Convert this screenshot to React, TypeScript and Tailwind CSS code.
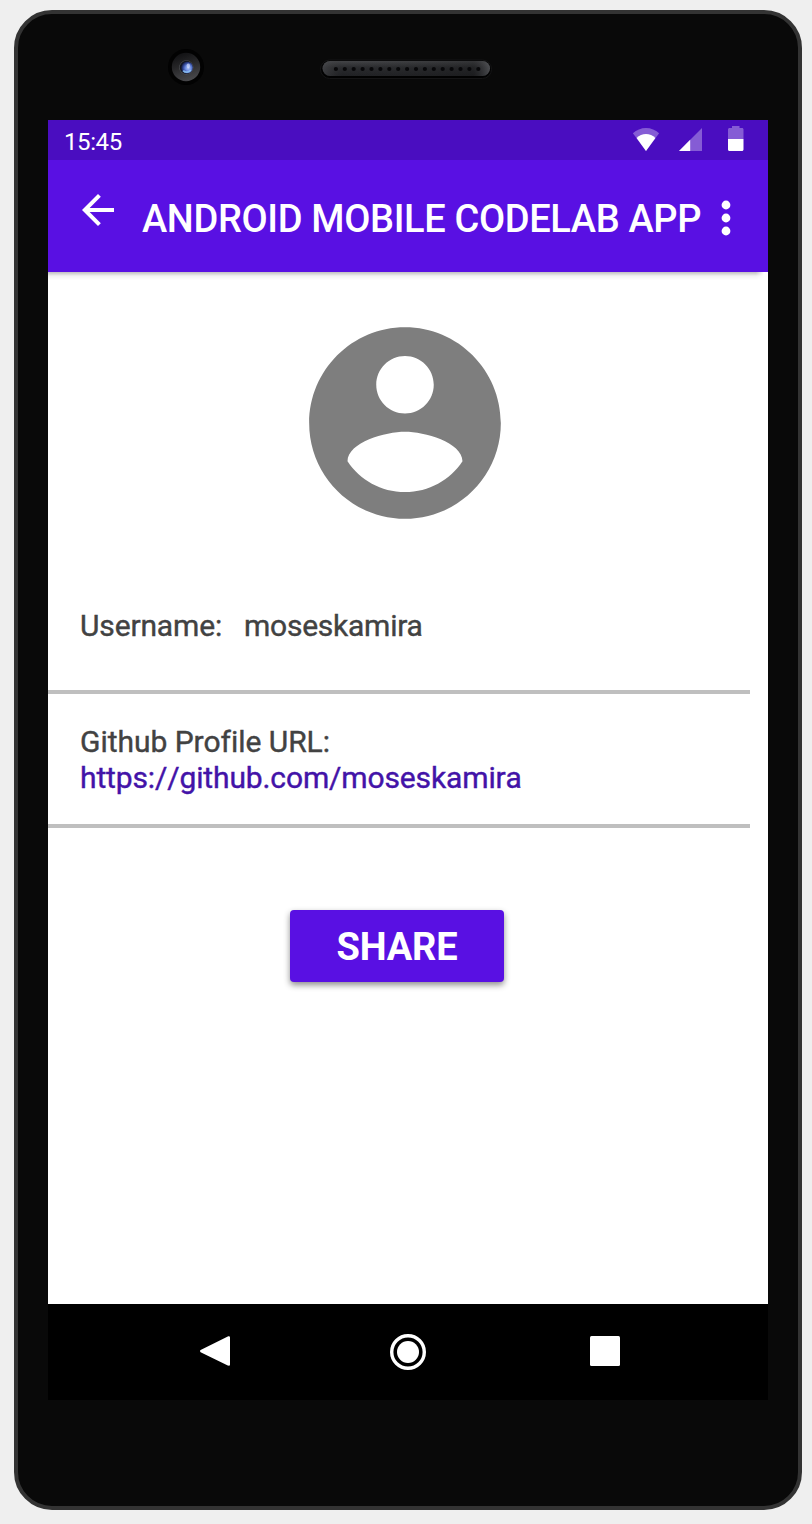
import React from "react";

const holes = Array.from({ length: 17 }, (_, i) => 17.9 + i * 8.9);

function Camera() {
  return (
    <svg width="40" height="40" viewBox="0 0 40 40" aria-hidden="true">
      <defs>
        <linearGradient id="barrel" x1="0.3" y1="0" x2="0.65" y2="1">
          <stop offset="0" stopColor="#101012" />
          <stop offset="0.4" stopColor="#252527" />
          <stop offset="1" stopColor="#4a4a4d" />
        </linearGradient>
        <radialGradient id="lens" cx="0.62" cy="0.55" r="0.6">
          <stop offset="0" stopColor="#b4c8f8" />
          <stop offset="0.4" stopColor="#6a8ae0" />
          <stop offset="0.75" stopColor="#2c3f8c" />
          <stop offset="1" stopColor="#10152a" />
        </radialGradient>
      </defs>
      <circle cx="20" cy="20" r="18" fill="#020202" />
      <circle cx="20" cy="20" r="14.2" fill="url(#barrel)" />
      <circle cx="20.3" cy="20.5" r="7.2" fill="#4a4c50" />
      <circle cx="20.3" cy="20.3" r="6.5" fill="#14161c" />
      <circle cx="20.8" cy="20.5" r="6" fill="url(#lens)" />
      <path d="M17.2 23.600a4.800 4.800 0 0 0 7.600-.6" fill="none" stroke="#8ec5f5" strokeWidth="1.800" opacity="0.85" />
      <ellipse cx="22.300" cy="18.800" rx="1.700" ry="2.400" fill="#dfe6ff" opacity="0.6" />
    </svg>
  );
}

function Speaker() {
  return (
    <svg width="176" height="24" viewBox="0 0 176 24" aria-hidden="true">
      <defs>
        <linearGradient id="grille" x1="0" y1="0" x2="0" y2="1">
          <stop offset="0" stopColor="#434447" />
          <stop offset="0.45" stopColor="#292a2d" />
          <stop offset="1" stopColor="#202124" />
        </linearGradient>
        <linearGradient id="grilleShade" x1="0" y1="0" x2="1" y2="0">
          <stop offset="0" stopColor="#55565a" stopOpacity="0.5" />
          <stop offset="0.12" stopColor="#333" stopOpacity="0" />
          <stop offset="0.9" stopColor="#111" stopOpacity="0.3" />
          <stop offset="1" stopColor="#66676b" stopOpacity="0.6" />
        </linearGradient>
      </defs>
      <rect x="2.5" y="3" width="171" height="18.5" rx="9.2" fill="#020202" stroke="#151516" />
      <rect x="4.5" y="4" width="167.500" height="15" rx="7.500" fill="url(#grille)" />
      <rect x="4.5" y="4" width="167.500" height="15" rx="7.500" fill="url(#grilleShade)" />
      {holes.map((x) => (
        <circle key={x} cx={x} cy="12" r="2.1" fill="#08080a" />
      ))}
    </svg>
  );
}

function StatusBar() {
  return (
    <div className="flex h-10 items-center justify-between bg-[#4a0dc0] pl-4 pr-6 text-white">
      <span className="pt-[3px] text-[24px] leading-8 tracking-[-0.4px]">15:45</span>
      <svg width="112" height="40" viewBox="0 0 112 40" aria-hidden="true">
        <path d="M.9 13.2C4.5 10 9 8 14 8s9.500 2 13.100 5.200L14 31z" fill="#fff" opacity="0.33" />
        <path d="M4.600 18.100C7.200 15.500 10.500 14 14 14s6.800 1.500 9.400 4.100L14 31z" fill="#fff" />
        <path d="M47 31L70 8v23z" fill="#fff" opacity="0.33" />
        <path d="M47 31l11.200-11.200V31z" fill="#fff" />
        <path d="M96 19V9.500c0-.9.700-1.500 1.500-1.500h2.500V6h7.500v2h2.500c.9 0 1.500.7 1.500 1.500V19z" fill="#fff" opacity="0.33" />
        <path d="M96 19h15.500v10.500c0 .9-.7 1.500-1.500 1.500H97.500c-.9 0-1.500-.7-1.500-1.500z" fill="#fff" />
      </svg>
    </div>
  );
}

function AppBar() {
  return (
    <header className="flex h-28 items-center bg-[#5910e3] text-white">
      <button className="mb-3 ml-[26px] size-12" aria-label="Back">
        <svg width="48" height="48" viewBox="0 0 24 24" fill="currentColor">
          <path d="M20 11H7.830l5.590-5.590L12 4l-8 8 8 8 1.410-1.410L7.830 13H20z" />
        </svg>
      </button>
      <h1 className="ml-5 w-[572px] whitespace-nowrap pt-1.5 text-[38px] font-medium leading-[48px] tracking-[-0.35px]">
        ANDROID MOBILE CODELAB APP
      </h1>
      <button className="mt-1 h-10 w-6" aria-label="More">
        <svg width="24" height="40" viewBox="0 0 24 40" fill="currentColor">
          <circle cx="12" cy="7" r="4.400" />
          <circle cx="12" cy="20" r="4.400" />
          <circle cx="12" cy="33" r="4.400" />
        </svg>
      </button>
    </header>
  );
}

function NavBar() {
  return (
    <nav className="flex h-24 items-center bg-black text-white">
      <svg className="ml-[152px] -mt-0.5" width="30" height="30" viewBox="0 0 30 30" fill="currentColor" aria-label="Back">
        <path d="M.6 14L27.800.4C29 0 30 .4 30 1.600v26.800c0 1.200-1 1.600-2.200 1.200L.6 16.200c-.8-.5-.8-1.700 0-2.200z" />
      </svg>
      <svg className="ml-[160px]" width="36" height="36" viewBox="0 0 36 36" aria-label="Home">
        <circle cx="18" cy="18" r="16.300" fill="none" stroke="white" strokeWidth="3.400" />
        <circle cx="18" cy="18" r="11" fill="white" />
      </svg>
      <div className="-mt-0.5 ml-[164px] size-[30px] rounded-[1.500px] bg-white" />
    </nav>
  );
}

export default function App() {
  return (
    <div className="h-[1524px] w-[812px] overflow-hidden bg-[#efefef] pl-[14px] pt-[10px] font-['Roboto',sans-serif]">
      <div className="h-[1500px] w-[788px] rounded-[38px] border-4 border-[#333] bg-[#090909] pl-[30px]">
        <div className="flex h-[106px] items-start">
          <div className="ml-[118px] mt-[33px]">
            <Camera />
          </div>
          <div className="ml-[112px] mt-[43px]">
            <Speaker />
          </div>
        </div>
        <div className="flex h-[1280px] w-[720px] flex-col bg-white text-[#424242]">
          <StatusBar />
          <AppBar />
          <div className="h-2 w-[716px] bg-linear-to-b from-black/25 via-black/5 to-transparent [mask-image:linear-gradient(to_left,transparent,black_8px)]" />
          <main className="flex flex-1 flex-col text-[30px] leading-9">
            <svg className="ml-[242px] mt-[28px]" width="230" height="230" viewBox="0 0 24 24" fill="#7e7e7e" aria-label="Profile picture">
              <path d="M12 2C6.480 2 2 6.480 2 12s4.480 10 10 10 10-4.480 10-10S17.520 2 12 2zm0 3c1.660 0 3 1.340 3 3s-1.340 3-3 3-3-1.340-3-3 1.340-3 3-3zm0 14.200c-2.500 0-4.710-1.280-6-3.220.03-1.990 4-3.080 6-3.080 1.990 0 5.970 1.090 6 3.080-1.290 1.940-3.500 3.220-6 3.220z" />
            </svg>
            <div className="flex h-[156px] w-[702px] gap-[22px] border-b-4 border-[#bfbfbf] pl-8 pt-[70px] [-webkit-text-stroke:0.4px]">
              <span className="tracking-[-0.15px]">Username:</span>
              <span className="tracking-[-0.25px]">moseskamira</span>
            </div>
            <div className="h-[134px] w-[702px] border-b-4 border-[#bfbfbf] pl-8 pt-[30px] [-webkit-text-stroke:0.4px]">
              <div className="tracking-[-0.03px] [font-variant-ligatures:none]">Github Profile URL:</div>
              <a className="tracking-[-0.13px] text-[#4313a8] [font-kerning:none]">https://github.com/moseskamira</a>
            </div>
            <button className="ml-[242px] mt-[82px] h-[72px] w-[214px] rounded-[4px] bg-[#5910e3] pt-0.5 text-[38px] font-bold tracking-[-0.2px] text-white shadow-[0_3px_6px_rgba(0,0,0,0.45)]">
              SHARE
            </button>
          </main>
          <NavBar />
        </div>
      </div>
    </div>
  );
}
